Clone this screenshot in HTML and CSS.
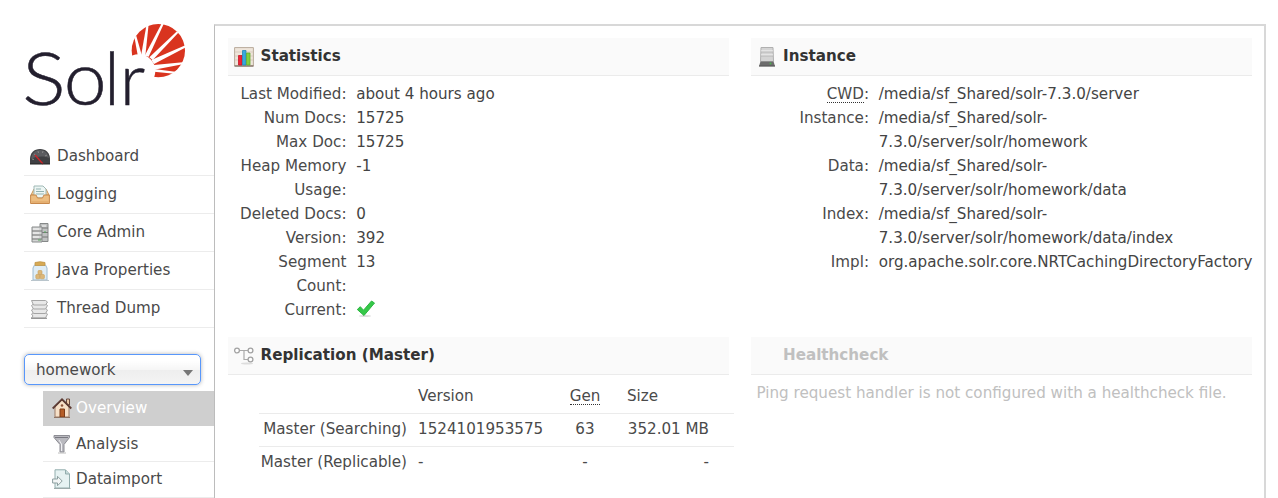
FILE: index.html
```html
<!DOCTYPE html>
<html lang="en">
<head>
<meta charset="utf-8">
<title>Solr Admin</title>
<link rel="stylesheet" href="styles.css">
</head>
<body>
<div class="wrapper">
  <aside class="sidebar">
    <svg class="logo" viewBox="0 0 564 330" role="img" aria-label="Solr">
      <circle cx="475" cy="152" r="80" fill="#d9341f"/>
      <circle cx="416" cy="213" r="50" fill="#fff"/>
      <g fill="#fff">
        <path d="M403 110l6-2 17 60-12 2z"/>
        <path d="M440 72h6l-10 96h-13z"/>
        <path d="M486 68l6 2-46 100-12-3z"/>
        <path d="M531 94l4 4-77 82-10-8z"/>
        <path d="M556 136l2 6-96 50-8-12z"/>
        <path d="M556 186v5l-94 18v-14z"/>
        <path d="M526 215l-3 6-61-6v-8z"/>
      </g>
      <g class="logo-text">
        <text transform="translate(67 315) scale(1.13 1)">S</text><text transform="translate(191 315) scale(1.07 1.03)">o</text><text x="312" y="315">l</text><text transform="translate(359 315) scale(1 1.02)">r</text>
      </g>
    </svg>

    <ul class="menu">
      <li><svg class="icon" viewBox="0 0 20 20"><path d="M0 17V12C0 6 4 2 10 2s10 4 10 10v5z" fill="#3f4043"/><path d="M1 12C2 6 5 3 10 3s8 3 9 8c-5-2-12-2-18 1z" fill="#5b5c60"/><path d="M2 12l2 .5M4 7l1.500 1M8 4l.5 2M13 4l-.5 2M17 8l-2 1" stroke="#888"/><path d="M5 8l8 9" stroke="#c9252a" stroke-width="1.500"/><path d="M0 17h20" stroke="#222"/></svg><span>Dashboard</span></li>
      <li><svg class="icon" viewBox="0 0 20 20"><path d="M1 10l3-6h12l3 6z" fill="#f4d2a0" stroke="#c89458"/><path d="M4 1h9l3 3v9H4z" fill="#edf6f4" stroke="#9fb8b5"/><path d="M6 4h5M6 6.500h8M6 9h8" stroke="#93b3b1"/><path d="M.6 10H6l1.500 3h5L14 10h5.400v8.500H.6z" fill="#edbd80" stroke="#c7884b"/><path d="M1.500 17h17" stroke="#dda262"/></svg><span>Logging</span></li>
      <li><svg class="icon" viewBox="0 0 20 20"><path d="M10 .5h8v18h-8z" fill="#bfc1c1" stroke="#858888"/><path d="M10 5h8M10 9.500h8M10 14h8" stroke="#777"/><path d="M2 4h10v15H2z" fill="#d4d5d5" stroke="#888b8b"/><path d="M2 8h10M2 12h10M2 16h10" stroke="#777"/><path d="M3 6h6M3 10h6M3 14h6M12 3h4" stroke="#f5f5f5"/><path d="M8 17h3M15 8v2" stroke="#54a85c"/></svg><span>Core Admin</span></li>
      <li><svg class="icon" viewBox="0 0 20 20"><path d="M4.500 4h11l1.500 3v12H3V7z" fill="#dfedf6" stroke="#9ebbd0"/><path d="M5 1.500Q10 0 15 1.500v3H5z" fill="#d7aa55" stroke="#c09548" stroke-width=".8"/><g fill="#dcb779" stroke="#c89d58" stroke-width=".6"><rect x="8" y="9.500" width="4" height="4" rx="1"/><rect x="5.800" y="13.500" width="4.200" height="4.300" rx="1"/><rect x="10.200" y="13.500" width="4.200" height="4.300" rx="1"/></g><path d="M1 19.500h18" stroke="#b9c5cc"/></svg><span>Java Properties</span></li>
      <li><svg class="icon" viewBox="0 0 20 20"><g fill="#e8e8e8" stroke="#a5a5a5"><path d="M1.500 15l2-1.500h12l2 1.500-2 4h-14l1.500-2z"/><path d="M1.500 11l2-1.500h12l2 1.500-2 3.500h-12z"/><path d="M1.500 6.500l2-1.500h12l2 1.500-2 3.500h-12z"/><path d="M1.500 1.500h14l2 1.500-2 3h-12z"/></g><path d="M1 19.300h16" stroke="#888"/></svg><span>Thread Dump</span></li>
    </ul>

    <div class="core-select"><span>homework</span><i class="caret"></i></div>

    <ul class="submenu">
      <li class="active"><svg class="icon" viewBox="0 0 20 20"><path d="M14.500 1h3v6h-3z" fill="#e9c8a8" stroke="#684b40"/><path d="M3 9l7-7 7 7v10H3z" fill="#f6e0c8" stroke="#9b7a67"/><path d="M.7 10.500L10 1.300l9.300 9.200" fill="none" stroke="#5d3b34" stroke-width="1.800"/><path d="M8 11h4.500v8H8z" fill="#b55d26" stroke="#7c3c19"/><circle cx="10" cy="7.500" r="1.300" fill="#8c553c"/><path d="M2 19.500h16" stroke="#8e7464"/></svg><span>Overview</span></li>
      <li><svg class="icon" viewBox="0 0 20 20"><path d="M2 1.500h15.500v2L12 10.500V18H8v-7.500L2 3.500z" fill="#b9b9bf" stroke="#8d8d94"/><path d="M3 3.500h13" stroke="#787880"/><path d="M7 6l2.500 4v7" fill="none" stroke="#f0f0f3"/><path d="M6 19h8" stroke="#bbb"/></svg><span>Analysis</span></li>
      <li><svg class="icon" viewBox="0 0 20 20"><path d="M3 .8h10.500L17.500 5v14H3z" fill="#e6f2f2" stroke="#92adad"/><path d="M13.500 1v4h4" fill="#c5dada" stroke="#92adad"/><path d="M.6 10H5.500V7.300l4.700 4.700-4.700 4.700V14H.6z" fill="#f3f6f6" stroke="#8d9fa0"/><path d="M2 19.500h16.500" stroke="#9daaaa"/></svg><span>Dataimport</span></li>
    </ul>
  </aside>

  <main class="content">
    <section class="column">
      <div class="block statistics">
        <h2><svg class="icon" viewBox="0 0 20 20"><path d="M.6.600h18.800v18.300H.6z" fill="#eee5da" stroke="#b9aa9b"/><path d="M1 5h18M1 9h18M1 13h18" stroke="#d9ccbf"/><path d="M.5 19h19" stroke="#827265" stroke-width="1.300"/><path d="M4.500 8.500H8V18H4.500z" fill="#ee2436" stroke="#c81426" stroke-width=".8"/><path d="M8.500 3.500H12V18H8.500z" fill="#3aa8dc" stroke="#2588b8" stroke-width=".8"/><path d="M12.500 6H16v12h-3.500z" fill="#83cf3d" stroke="#62ab31" stroke-width=".8"/></svg><span>Statistics</span></h2>
        <dl>
          <dt>Last Modified:</dt><dd>about 4 hours ago</dd>
          <dt>Num Docs:</dt><dd>15725</dd>
          <dt>Max Doc:</dt><dd>15725</dd>
          <dt>Heap Memory<br>Usage:</dt><dd>-1</dd>
          <dt>Deleted Docs:</dt><dd>0</dd>
          <dt>Version:</dt><dd>392</dd>
          <dt>Segment<br>Count:</dt><dd>13</dd>
          <dt>Current:</dt><dd><svg class="icon tick" viewBox="0 0 20 20"><ellipse cx="9" cy="17" rx="6" ry="1" fill="#ddd"/><path d="M1.300 10.500l3-2.800 3.200 3.500L15.500 2l3 2L8 16.500z" fill="#35c848" stroke="#2cb541" stroke-linejoin="round"/></svg></dd>
        </dl>
      </div>
      <div class="block replication">
        <h2><svg class="icon" viewBox="0 0 20 20"><ellipse cx="13" cy="17.500" rx="6" ry="1" fill="#ddd"/><path d="M5 4.500h9M10 4.500v9h4" fill="none" stroke="#aaa" stroke-width="1.200"/><g fill="#fff" stroke="#a2a2a2" stroke-width="1.300"><circle cx="3" cy="4.500" r="2.400"/><circle cx="16.500" cy="4.500" r="2.400"/><circle cx="16.500" cy="13.500" r="2.400"/></g></svg><span>Replication (Master)</span></h2>
        <table>
          <thead><tr><th class="name"></th><th class="version">Version</th><th class="gen"><abbr>Gen</abbr></th><th class="size">Size</th><th></th></tr></thead>
          <tbody>
            <tr><td class="name">Master (Searching)</td><td class="version">1524101953575</td><td class="gen">63</td><td class="size">352.01 MB</td><td></td></tr>
            <tr><td class="name">Master (Replicable)</td><td class="version">-</td><td class="gen">-</td><td class="size">-</td><td></td></tr>
          </tbody>
        </table>
      </div>
    </section>

    <section class="column">
      <div class="block instance">
        <h2><svg class="icon" viewBox="0 0 20 20"><path d="M4 .5h12l.5 14h-13z" fill="#d4d4d4" stroke="#b0b0b0"/><path d="M4 4h12M4 8h12" stroke="#f5f5f5"/><path d="M4 5h12M4 9h12" stroke="#aaa" stroke-width=".7"/><path d="M3.500 14.500h13l1.500 4.700H2z" fill="#6c6c6c"/><path d="M2 19h16" stroke="#555"/><circle cx="13.500" cy="16.500" r="1" fill="#4db250"/></svg><span>Instance</span></h2>
        <dl>
          <dt><abbr>CWD</abbr>:</dt><dd>/media/sf_Shared/solr-7.3.0/server</dd>
          <dt>Instance:</dt><dd>/media/sf_Shared/solr-<br>7.3.0/server/solr/homework</dd>
          <dt>Data:</dt><dd>/media/sf_Shared/solr-<br>7.3.0/server/solr/homework/data</dd>
          <dt>Index:</dt><dd>/media/sf_Shared/solr-<br>7.3.0/server/solr/homework/data/index</dd>
          <dt>Impl:</dt><dd>org.apache.solr.core.NRTCachingDirectoryFactory</dd>
        </dl>
      </div>
      <div class="block healthcheck">
        <h2><i class="icon"></i><span>Healthcheck</span></h2>
        <p>Ping request handler is not configured with a healthcheck file.</p>
      </div>
    </section>
  </main>
</div>
</body>
</html>
```
FILE: styles.css
```css
* { box-sizing: border-box; }

html, body { height: 100%; }

body {
  margin: 0;
  overflow: hidden;
  background: #fff;
  color: #4a4a4a;
  font: 15.15px/24.05px "DejaVu Sans", sans-serif;
}

ul, dl, dd, h2, p { margin: 0; padding: 0; list-style: none; }

.wrapper { display: flex; height: 498px; padding-left: 24px; }

.sidebar { width: 190px; flex: none; }

.logo { display: block; width: 188px; height: 110px; margin-left: -24px; overflow: visible; }
.logo-text { font: 300 216px Lato, sans-serif; fill: #231f2e; stroke: #231f2e; stroke-width: 1.500; }

.icon { display: block; flex: none; width: 20px; height: 20px; fill: none; }

.menu { padding-top: 28px; }
.menu li {
  display: flex;
  gap: 7px;
  height: 38px;
  padding: 6px 0 0 6px;
  border-bottom: 1px solid #ececec;
}
.menu .icon { margin-top: 3px; }

.core-select {
  display: flex;
  align-items: center;
  justify-content: space-between;
  width: 177px;
  height: 31px;
  margin-top: 26px;
  padding: 1px 7px 0 11px;
  border: 1px solid #5897fb;
  border-radius: 5px;
  background: linear-gradient(#fff 20%, #f6f6f6 50%, #eee 52%, #f4f4f4);
  box-shadow: 0 0 4px rgba(0, 0, 0, .3);
}
.caret {
  margin-top: 5px;
  border: 5px solid transparent;
  border-top: 6px solid #777;
  border-bottom: 0;
}

.submenu { margin: 6px 0 0 19px; }
.submenu li {
  display: flex;
  gap: 4px;
  height: 35.500px;
  padding: 5px 0 0 9px;
  border-bottom: 1px solid #ececec;
}
.submenu .icon { margin-top: 2px; }
.submenu .active { border-bottom-color: #fff; background: #cfcfcf; color: #fff; }

.content {
  display: flex;
  gap: 21.500px;
  width: 1052px;
  height: 474px;
  margin-top: 24px;
  padding: 12px 12px 0 13px;
  border: 2px solid #d8d8d8;
  border-left: 1px solid #bcbcbc;
  border-bottom: 0;
}
.column { width: 501px; flex: none; }

h2 {
  display: flex;
  gap: 6.500px;
  height: 38px;
  padding: 6px 0 0 6px;
  border-bottom: 1px solid #ebebeb;
  background: #fafafa;
  color: #333;
  font-size: 15.15px;
  font-weight: bold;
  line-height: 24px;
}
h2 .icon { margin-top: 3px; }

dl { display: grid; grid-template-columns: 118.500px 1fr; column-gap: 9.700px; height: 261px; padding-top: 6px; align-content: start; }
dt { text-align: right; white-space: nowrap; }
dd { color: #444; white-space: nowrap; }
.tick { margin-top: 1px; }

abbr { border-bottom: 1px dotted #333; display: inline-block; line-height: 16px; }

table { width: 475px; margin: 5px 0 0 31px; border-collapse: collapse; table-layout: fixed; }
th, td { height: 33px; padding: 0; white-space: nowrap; }
td { padding-bottom: 1px; }
th { font-weight: normal; text-align: left; }
tr { border-bottom: 1px solid #ebebeb; }
tbody tr:last-child { border-bottom: 0; }
.name { width: 159px; padding-right: 11px; text-align: right; }
.version { width: 141px; }
.gen { width: 52px; text-align: center; }
.size { width: 98px; }
th.size { padding-left: 16px; }
td.size { text-align: right; }

.healthcheck, .healthcheck h2 { color: #c0c0c0; }
.healthcheck p { padding: 6px 0 0 6px; white-space: nowrap; }
```
